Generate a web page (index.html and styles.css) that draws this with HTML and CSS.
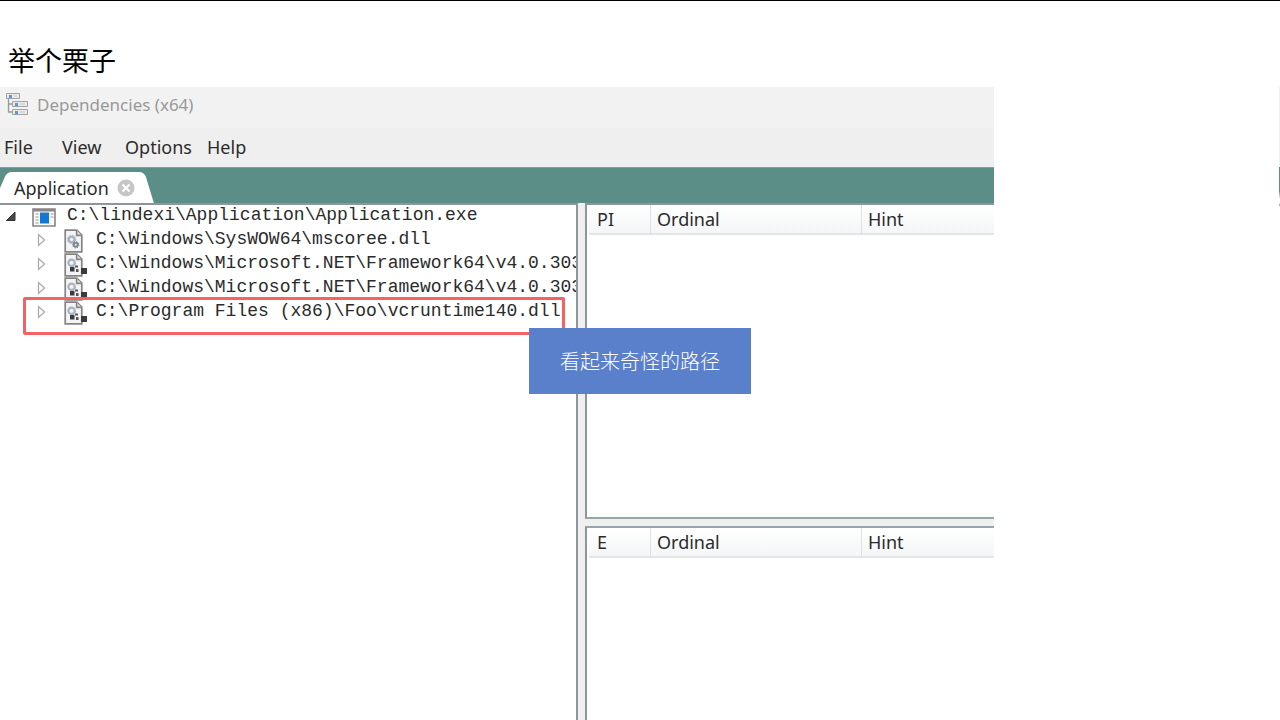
FILE: index.html
```html
<!doctype html>
<html lang="zh-CN">
<head>
	<meta charset="utf-8">
	<meta name="viewport" content="width=device-width, initial-scale=1.0">
	<title>举个栗子</title>
	<link rel="stylesheet" href="styles.css">
</head>
<body>
	<!-- shared tree icons -->
	<svg class="defs" width="0" height="0" aria-hidden="true">
		<symbol id="file" viewBox="0 0 24 24">
			<path d="M1.2 1.2h11.6l5 5v16.6H1.2z" fill="#f4f4f4" stroke="#858585" stroke-width="1.7"/>
			<path d="M12.6 1.2v5.2h5.2" fill="#ddd" stroke="#858585" stroke-width="1.6"/>
		</symbol>
		<symbol id="dll" viewBox="0 0 24 24">
			<use href="#file"/>
			<circle cx="7.6" cy="10.4" r="2.8" fill="none" stroke="#a9b3be" stroke-width="2.4"/>
			<circle cx="7.6" cy="10.4" r="4.2" fill="none" stroke="#a9b3be" stroke-width="1" stroke-dasharray="1.6 1.7"/>
			<circle cx="11.8" cy="15.8" r="2" fill="none" stroke="#7d8791" stroke-width="2"/>
			<circle cx="11.8" cy="15.8" r="3.2" fill="none" stroke="#7d8791" stroke-width="1" stroke-dasharray="1.2 1.3"/>
		</symbol>
		<symbol id="dll-ref" viewBox="0 0 24 24">
			<use href="#file"/>
			<circle cx="7.6" cy="9.8" r="3.2" fill="none" stroke="#a9b3be" stroke-width="2.2"/>
			<path d="M6 14h4.500v4.500H6zM17 15h6v6h-6z" fill="#3b3b3b"/>
			<path d="M11 12.500h3v2h-3zM12 16h2.500v3H12z" fill="#555"/>
		</symbol>
		<symbol id="closed" viewBox="0 0 12 14">
			<path d="M2.500 1.500v11L8.500 7z" fill="#fff" stroke="#a6a6a6" stroke-width="1.2"/>
		</symbol>
	</svg>

	<main class="slide">
		<h1>举个栗子</h1>
		<div class="shots">
			<section class="window">
				<header class="titlebar">
					<svg class="logo" viewBox="0 0 22 22" aria-hidden="true">
						<path d="M2.500 6v13H7M2.500 11H7" fill="none" stroke="#999" stroke-width="1.3"/>
						<g fill="#e8eaec" stroke="#a3a3a3">
							<path d="M.5.5h13v5H.5zM6.500 8.500h15v5h-15zM6.500 16.500h15v5h-15z"/>
						</g>
						<path d="M3 2h3v3H3zM9 10h3v3H9zM9 18h3v3H9z" fill="#4b9bf0"/>
						<path d="M8 3h3M14 11h5M14 19h5" stroke="#c4c4c4"/>
					</svg>
					<span>Dependencies (x64)</span>
				</header>
				<nav class="menu">
					<button type="button">File</button>
					<button type="button">View</button>
					<button type="button">Options</button>
					<button type="button">Help</button>
				</nav>
				<div class="tabs">
					<div class="tab">
						<svg class="tab-shape" viewBox="0 0 156 33" preserveAspectRatio="none" aria-hidden="true">
							<path d="M0 33V17L5 5Q7 0 12 0H140Q145 0 147 5L155 33z" fill="#fff"/>
						</svg>
						<button type="button" class="tab-name">Application</button>
						<button type="button" class="tab-close" aria-label="Close">
							<svg viewBox="0 0 18 18"><circle cx="9" cy="9" r="8.500" fill="#c6c6c6"/><path d="M5.500 5.500l7 7m0-7l-7 7" stroke="#fff" stroke-width="2.200"/></svg>
						</button>
					</div>
				</div>
				<div class="panes">
					<div class="pane tree">
						<div class="row root">
							<button type="button" class="toggle" aria-label="Collapse"><svg viewBox="0 0 12 14"><path d="M11 3v8.500H2.500z" fill="#484848" stroke="#333"/></svg></button>
							<svg class="icon" viewBox="0 0 24 24" aria-hidden="true">
								<path d="M1 4h22v17H1z" fill="#fafafa" stroke="#8b8585" stroke-width="1.600"/>
								<path d="M1 4h22v2.500H1z" fill="#8b8585"/>
								<path d="M8 7.500h9v11H8z" fill="#1179d3"/>
								<path d="M3.500 9h3M3.500 12h3M3.500 15h3M3.500 18h3M18.500 9h3M18.500 12h3" stroke="#9a9a9a"/>
							</svg>
							<span>C:\lindexi\Application\Application.exe</span>
						</div>
						<ul>
							<li class="row">
								<button type="button" class="toggle" aria-label="Expand"><svg><use href="#closed"/></svg></button>
								<svg class="icon"><use href="#dll"/></svg>
								<span>C:\Windows\SysWOW64\mscoree.dll</span>
							</li>
							<li class="row">
								<button type="button" class="toggle" aria-label="Expand"><svg><use href="#closed"/></svg></button>
								<svg class="icon"><use href="#dll-ref"/></svg>
								<span>C:\Windows\Microsoft.NET\Framework64\v4.0.303</span>
							</li>
							<li class="row">
								<button type="button" class="toggle" aria-label="Expand"><svg><use href="#closed"/></svg></button>
								<svg class="icon"><use href="#dll-ref"/></svg>
								<span>C:\Windows\Microsoft.NET\Framework64\v4.0.303</span>
							</li>
							<li class="row marked">
								<button type="button" class="toggle" aria-label="Expand"><svg><use href="#closed"/></svg></button>
								<svg class="icon"><use href="#dll-ref"/></svg>
								<span>C:\Program Files (x86)\Foo\vcruntime140.dll</span>
							</li>
						</ul>
					</div>
					<div class="lists">
						<div class="pane">
							<table>
								<thead><tr><th class="kind">PI</th><th class="ordinal">Ordinal</th><th>Hint</th></tr></thead>
							</table>
						</div>
						<div class="pane">
							<table>
								<thead><tr><th class="kind">E</th><th class="ordinal">Ordinal</th><th>Hint</th></tr></thead>
							</table>
						</div>
					</div>
				</div>
			</section>
			<!-- edge of the next shot -->
			<div class="next"></div>
		</div>
		<p class="callout">看起来奇怪的路径</p>
	</main>
</body>
</html>
```
FILE: styles.css
```css
*, *::after {box-sizing:border-box; margin:0; padding:0;}
body {background:#fff; color:#000; font-family:"Noto Sans","Noto Sans CJK SC",sans-serif;}
button {border:0; background:none; color:inherit; font:inherit; text-align:left;}
svg {display:block;}
ul {list-style:none;}
.defs {position:absolute;}

.slide {position:relative; display:flex; flex-direction:column; height:100vh; border-top:1px solid #000; overflow:hidden;}
h1 {padding:39px 8px 7px; font:400 27px/40px "Noto Sans CJK SC",sans-serif;}
.shots {flex:1; display:grid; grid-template-columns:994fr 285fr 1px; min-height:0;}

.window {display:flex; flex-direction:column; min-width:0; min-height:0; color:#2b2b2b; font-size:18px;}
.titlebar {display:flex; align-items:flex-start; gap:9px; height:41px; padding:6px; background:#f2f2f2; color:#999; font-size:17px; line-height:24px;}
.logo {width:22px; height:22px;}
.menu {display:grid; grid-template-columns:58px 63px 82px auto; height:39px; padding:0 4px 2px; background:#efefef;}

.tabs {display:flex; align-items:flex-end; height:36px; background:#5b8e86; border-top:1px solid #7ba39d;}
.tab {position:relative; display:flex; align-items:center; gap:8px; height:31px; padding:0 20px 0 14px;}
.tab-shape {position:absolute; top:0; left:0; width:100%; height:100%;}
.tab-name, .tab-close {position:relative;}
.tab-close svg {width:18px; height:18px;}

.panes {flex:1; display:grid; grid-template-columns:578fr 7px 409fr; min-height:0; background:#efefef;}
.pane {min-width:0; background:#fff; border:2px solid #8d969c; border-right:0; border-bottom:0; overflow:hidden;}
.tree {border-left:0; border-right:2px solid #8d969c;}
.lists {grid-column:3; display:grid; grid-template-rows:316fr 194fr; gap:7px; min-height:0;}
.lists .pane:first-child {border-bottom:2px solid #98a5a8;}
.lists .pane:last-child {border-top-color:#98a5a8;}

.row {position:relative; display:flex; height:24px; padding-left:36px; font:18px/20px "Liberation Mono",monospace; white-space:pre;}
.root {padding-left:4px;}
.toggle {flex:none; width:12px; margin-right:16px;}
.toggle svg {width:12px; height:14px; margin-bottom:2px;}
.icon {flex:none; width:24px; height:24px;}
.row span {margin-left:8px;}
.root span {margin-left:11px;}
.marked::after {content:""; position:absolute; top:-4px; left:23px; width:542px; height:38px; border:3px solid #f46262; border-radius:2px;}

table {width:100%; padding-left:2px; border-spacing:0; table-layout:fixed;}
th {height:30px; padding:0 6px; background:linear-gradient(#fff,#f4f6f7); border-bottom:2px solid #e3e5e6; border-left:1px solid #dedfe0; font-weight:400; text-align:left;}
.kind {width:61px; padding-left:8px; border-left:0;}
.ordinal {width:211px;}

.next {grid-column:3; height:120px; background:linear-gradient(#f0f0f0 80px,#5b8e86 80px,#5b8e86 104px,#fff 112px,#fff 116px,#999 118px,#fff);}
.callout {position:absolute; top:50%; left:50%; transform:translate(-50%,-50%); padding:18px 31px; background:#5b80cb; color:#fff; font:300 20px/30px "Noto Sans CJK SC",sans-serif; white-space:nowrap;}
```
